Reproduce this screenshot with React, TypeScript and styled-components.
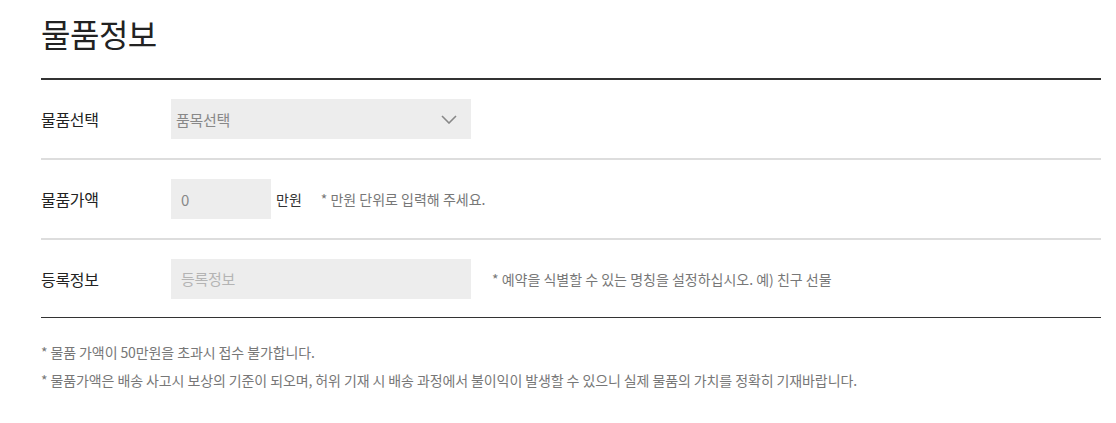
import React from 'react';
import styled, { createGlobalStyle } from 'styled-components';

const GlobalStyle = createGlobalStyle`
  body {
    margin: 0;
    background: #fff;
    font-family: "Noto Sans CJK KR", "Noto Sans", sans-serif;
    color: #222;
  }
`;

const Page = styled.div`
  width: 1060px;
  padding: 0 15px 0 41px;
`;

const Title = styled.h2`
  margin: 0;
  padding-top: 13px;
  height: 78px;
  box-sizing: border-box;
  font-size: 32px;
  font-weight: 400;
  letter-spacing: -0.5px;
  line-height: 40px;
  color: #222;
`;

const Form = styled.div`
  border-top: 2px solid #333;
  border-bottom: 1px solid #333;
`;

const Row = styled.div<{ $last?: boolean }>`
  display: flex;
  align-items: center;
  height: ${(p) => (p.$last ? '77px' : '78px')};
  border-bottom: ${(p) => (p.$last ? 'none' : '2px solid #ddd')};
`;

const Label = styled.div`
  width: 130px;
  flex: none;
  font-size: 16px;
  letter-spacing: -0.3px;
  color: #222;
`;

const Field = styled.div<{ $w: number; $pad: number }>`
  width: ${(p) => p.$w}px;
  height: 40px;
  flex: none;
  background: #ededed;
  display: flex;
  align-items: center;
  justify-content: space-between;
  padding: 0 14px 0 ${(p) => p.$pad}px;
  box-sizing: border-box;
  font-size: 15px;
  letter-spacing: -0.3px;
`;

const FieldText = styled.span<{ $muted?: boolean }>`
  color: ${(p) => (p.$muted ? '#b4b4b4' : '#888')};
`;

const Unit = styled.span`
  margin-left: 5px;
  font-size: 14px;
  font-weight: 400;
  color: #333;
`;

const Note = styled.span<{ $gap: number }>`
  margin-left: ${(p) => p.$gap}px;
  font-size: 14px;
  color: #777;
`;

const Notes = styled.ul`
  list-style: none;
  margin: 0;
  padding: 20px 0 0;
`;

const NoteItem = styled.li`
  font-size: 14px;
  letter-spacing: -0.1px;
  line-height: 28px;
  color: #777;
`;

const Chevron = () => (
  <svg width="16" height="9" viewBox="0 0 16 9">
    <path d="M1 1 L8 8 L15 1" fill="none" stroke="#888" strokeWidth="1.6" />
  </svg>
);

export default function App() {
  return (
    <>
      <GlobalStyle />
      <Page>
        <Title>물품정보</Title>
        <Form>
          <Row>
            <Label>물품선택</Label>
            <Field $w={300} $pad={5}>
              <FieldText>품목선택</FieldText>
              <Chevron />
            </Field>
          </Row>
          <Row>
            <Label>물품가액</Label>
            <Field $w={100} $pad={10}>
              <FieldText>0</FieldText>
            </Field>
            <Unit>만원</Unit>
            <Note $gap={19}>* 만원 단위로 입력해 주세요.</Note>
          </Row>
          <Row $last>
            <Label>등록정보</Label>
            <Field $w={300} $pad={10}>
              <FieldText $muted>등록정보</FieldText>
            </Field>
            <Note $gap={21}>* 예약을 식별할 수 있는 명칭을 설정하십시오. 예) 친구 선물</Note>
          </Row>
        </Form>
        <Notes>
          <NoteItem>* 물품 가액이 50만원을 초과시 접수 불가합니다.</NoteItem>
          <NoteItem>* 물품가액은 배송 사고시 보상의 기준이 되오며, 허위 기재 시 배송 과정에서 불이익이 발생할 수 있으니 실제 물품의 가치를 정확히 기재바랍니다.</NoteItem>
        </Notes>
      </Page>
    </>
  );
}
